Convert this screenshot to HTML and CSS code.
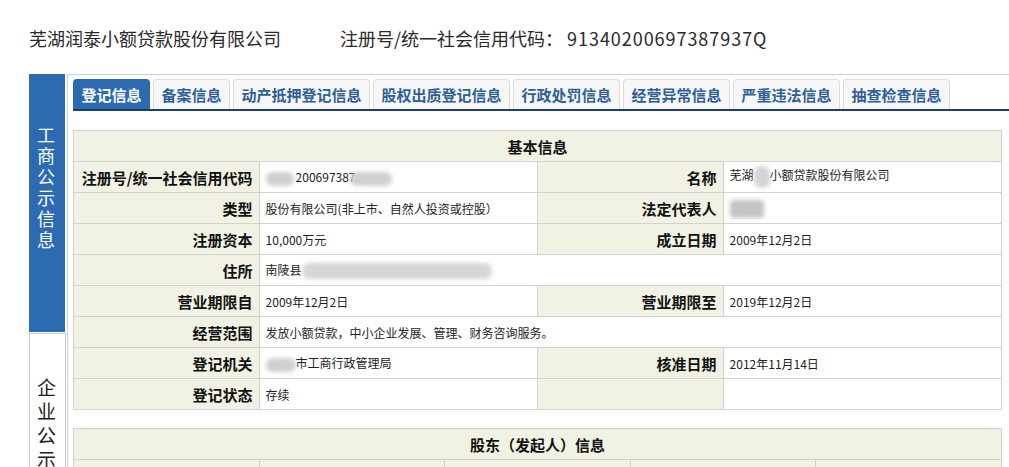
FILE: index.html
```html
<!DOCTYPE html>
<html lang="zh-CN">
<head>
<meta charset="utf-8">
<title>芜湖润泰小额贷款股份有限公司</title>
<link rel="stylesheet" href="styles.css">
</head>
<body>
<header class="top">
  <span class="company">芜湖润泰小额贷款股份有限公司</span>
  <span class="regno">注册号/统一社会信用代码： <span class="num">91340200697387937Q</span></span>
</header>
<div class="page">
  <aside class="sidebar">
    <div class="side-tab active">工商公示信息</div>
    <div class="side-tab">企业公示信息</div>
  </aside>
  <main class="main">
    <nav class="tabs">
      <span class="tab active">登记信息</span>
      <span class="tab">备案信息</span>
      <span class="tab">动产抵押登记信息</span>
      <span class="tab">股权出质登记信息</span>
      <span class="tab">行政处罚信息</span>
      <span class="tab">经营异常信息</span>
      <span class="tab">严重违法信息</span>
      <span class="tab">抽查检查信息</span>
    </nav>
    <table class="info">
      <colgroup><col class="c20"><col class="c30"><col class="c20"><col class="c30"></colgroup>
      <tr><th colspan="4" class="title">基本信息</th></tr>
      <tr>
        <th>注册号/统一社会信用代码</th>
        <td><span class="blur w28"></span><span class="pull">200697387</span><span class="blur w40 back"></span></td>
        <th>名称</th>
        <td>芜湖<span class="blur w18 tall"></span>小额贷款股份有限公司</td>
      </tr>
      <tr>
        <th>类型</th>
        <td>股份有限公司(非上市、自然人投资或控股）</td>
        <th>法定代表人</th>
        <td><span class="blur w36 grey"></span></td>
      </tr>
      <tr>
        <th>注册资本</th>
        <td>10,000万元</td>
        <th>成立日期</th>
        <td>2009年12月2日</td>
      </tr>
      <tr>
        <th>住所</th>
        <td colspan="3">南陵县<span class="blur w190"></span></td>
      </tr>
      <tr>
        <th>营业期限自</th>
        <td>2009年12月2日</td>
        <th>营业期限至</th>
        <td>2019年12月2日</td>
      </tr>
      <tr>
        <th>经营范围</th>
        <td colspan="3">发放小额贷款，中小企业发展、管理、财务咨询服务。</td>
      </tr>
      <tr>
        <th>登记机关</th>
        <td><span class="blur w30"></span>市工商行政管理局</td>
        <th>核准日期</th>
        <td>2012年11月14日</td>
      </tr>
      <tr>
        <th>登记状态</th>
        <td>存续</td>
        <th></th>
        <td></td>
      </tr>
    </table>
    <table class="info second">
      <tr><th colspan="5" class="title">股东（发起人）信息</th></tr>
      <tr class="cols"><th></th><th></th><th></th><th></th><th></th></tr>
    </table>
  </main>
</div>
</body>
</html>
```

FILE: styles.css
```css
html, body {
  margin: 0;
  padding: 0;
  background: #fff;
  overflow: hidden;
}
body {
  font-family: "Noto Sans CJK SC", "Noto Sans", sans-serif;
  color: #222;
}
.top {
  height: 74px;
  box-sizing: border-box;
  padding: 26px 0 0 29px;
  font-size: 18px;
  line-height: 24px;
  color: #2a2a2a;
  display: flex;
  gap: 59px;
}
.num {
  letter-spacing: 0.95px;
}
.page {
  display: flex;
  padding-left: 29px;
}
.sidebar {
  width: 37px;
  margin-right: 1px;
  display: flex;
  flex-direction: column;
  gap: 1px;
  flex-shrink: 0;
}
.side-tab {
  writing-mode: vertical-rl;
  text-orientation: upright;
  box-sizing: border-box;
  border: 1px solid #c8c8c8;
  background: #fff;
  color: #222;
  font-size: 19px;
  line-height: 37px;
  letter-spacing: 5px;
  height: 320px;
  padding-top: 44px;
  width: 37px;
}
.side-tab.active {
  background: #2c6bb1;
  border-color: #2c6bb1;
  color: #fff;
  height: 258px;
  width: 36px;
  font-size: 18px;
  letter-spacing: 3px;
  line-height: 36px;
  padding-top: 51px;
}
.main {
  flex: 1;
  border-top: 1px solid #cfcfcf;
  border-left: 1px solid #cfcfcf;
  padding: 4px 0 0 5px;
  min-width: 0;
}
.tabs {
  display: flex;
  gap: 3px;
  border-bottom: 2px solid #1f3e66;
  height: 30px;
  align-items: flex-end;
}
.tab {
  box-sizing: border-box;
  height: 30px;
  padding: 0 7.5px;
  border: 1px solid #dcdcdc;
  border-bottom: none;
  border-radius: 4px 4px 0 0;
  background: #f7f7f7;
  color: #2f5f99;
  font-size: 15px;
  font-weight: bold;
  line-height: 29px;
  white-space: nowrap;
}
.tab.active {
  background: #2c6bb1;
  border-color: #2c6bb1;
  color: #fff;
}
.info {
  width: 929px;
  border-collapse: collapse;
  table-layout: fixed;
  margin-top: 19px;
}
.info.second {
  margin-top: 18px;
}
.c20 { width: 20%; }
.c30 { width: 30%; }
.info th, .info td {
  border: 1px solid #d2d2d2;
  height: 31px;
  padding: 0 6px;
  box-sizing: border-box;
  white-space: nowrap;
  overflow: hidden;
}
.info th {
  background: #f1f1e4;
  font-size: 15px;
  font-weight: bold;
  color: #111;
  text-align: right;
}
.info th.title {
  text-align: center;
}
.info td {
  background: #fff;
  font-size: 12px;
  color: #222;
  text-align: left;
}
.info .cols th {
  text-align: center;
}
.blur {
  display: inline-block;
  height: 14px;
  vertical-align: middle;
  background: #cfcfcf;
  border-radius: 7px;
  filter: blur(2px);
}
.w18 { width: 16px; height: 22px; background: #d4d4d4; }
.w28 { width: 28px; }
.w30 { width: 30px; }
.w36 { width: 34px; height: 18px; background: #c4c4c4; border-radius: 3px; }
.w40 { width: 42px; }
.w190 { width: 190px; height: 16px; background: #d6d6d6; }
.pull { margin-left: 2px; }
.back { margin-left: -6px; }
```
